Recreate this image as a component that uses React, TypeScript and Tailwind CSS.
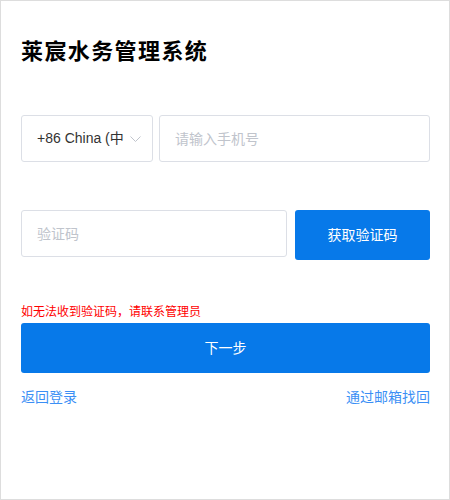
import React, { useState } from 'react';

const App: React.FC = () => {
  const [phone, setPhone] = useState('');
  const [code, setCode] = useState('');

  return (
    <div
      className="w-[450px] h-[500px] bg-white border border-[#dddddd] pl-[20px] pr-[19px] pt-[38px]"
      style={{ fontFamily: '"Liberation Sans", "Noto Sans CJK SC", sans-serif' }}
    >
      {/* Title */}
      <h1 className="text-[22px] leading-[26px] font-bold text-black tracking-[1.4px]">
        莱宸水务管理系统
      </h1>

      {/* Phone row */}
      <div className="flex gap-[6px] mt-[50px]">
        <div className="w-[132px] h-[47px] border border-[#dcdfe6] rounded-[3px] flex items-center pl-[15px] pr-[11px]">
          <span className="flex-1 whitespace-nowrap text-[14px] text-[#333]">+86 China (中</span>
          <svg className="ml-[6px] w-[11px] h-[6px]" viewBox="0 0 11 6" fill="none">
            <path d="M0.5 0.5L5.5 5.5L10.5 0.5" stroke="#c0c4cc" strokeWidth="1" />
          </svg>
        </div>
        <input
          value={phone}
          onChange={(e) => setPhone(e.target.value)}
          placeholder="请输入手机号"
          className="flex-1 h-[47px] border border-[#dcdfe6] rounded-[3px] px-[15px] text-[14px] text-[#333] placeholder:text-[#c0c4cc] outline-none"
        />
      </div>

      {/* Code row */}
      <div className="flex items-start gap-[8px] mt-[48px]">
        <input
          value={code}
          onChange={(e) => setCode(e.target.value)}
          placeholder="验证码"
          className="w-[266px] h-[47px] border border-[#dcdfe6] rounded-[3px] px-[15px] text-[14px] text-[#333] placeholder:text-[#c0c4cc] outline-none"
        />
        <button
          type="button"
          className="flex-1 h-[50px] bg-[#0779e9] rounded-[3px] text-white text-[14px]"
        >
          获取验证码
        </button>
      </div>

      {/* Tip */}
      <p className="mt-[44px] text-[12px] leading-[16px] text-[#ff0000]">
        如无法收到验证码，请联系管理员
      </p>

      {/* Next */}
      <button
        type="button"
        className="mt-[3px] w-full h-[50px] bg-[#0779e9] rounded-[3px] text-white text-[14px]"
      >
        下一步
      </button>

      {/* Links */}
      <div className="flex justify-between mt-[14px] text-[14px] leading-[20px] text-[#3b8ff5]">
        <a href="#">返回登录</a>
        <a href="#">通过邮箱找回</a>
      </div>
    </div>
  );
};

export default App;
